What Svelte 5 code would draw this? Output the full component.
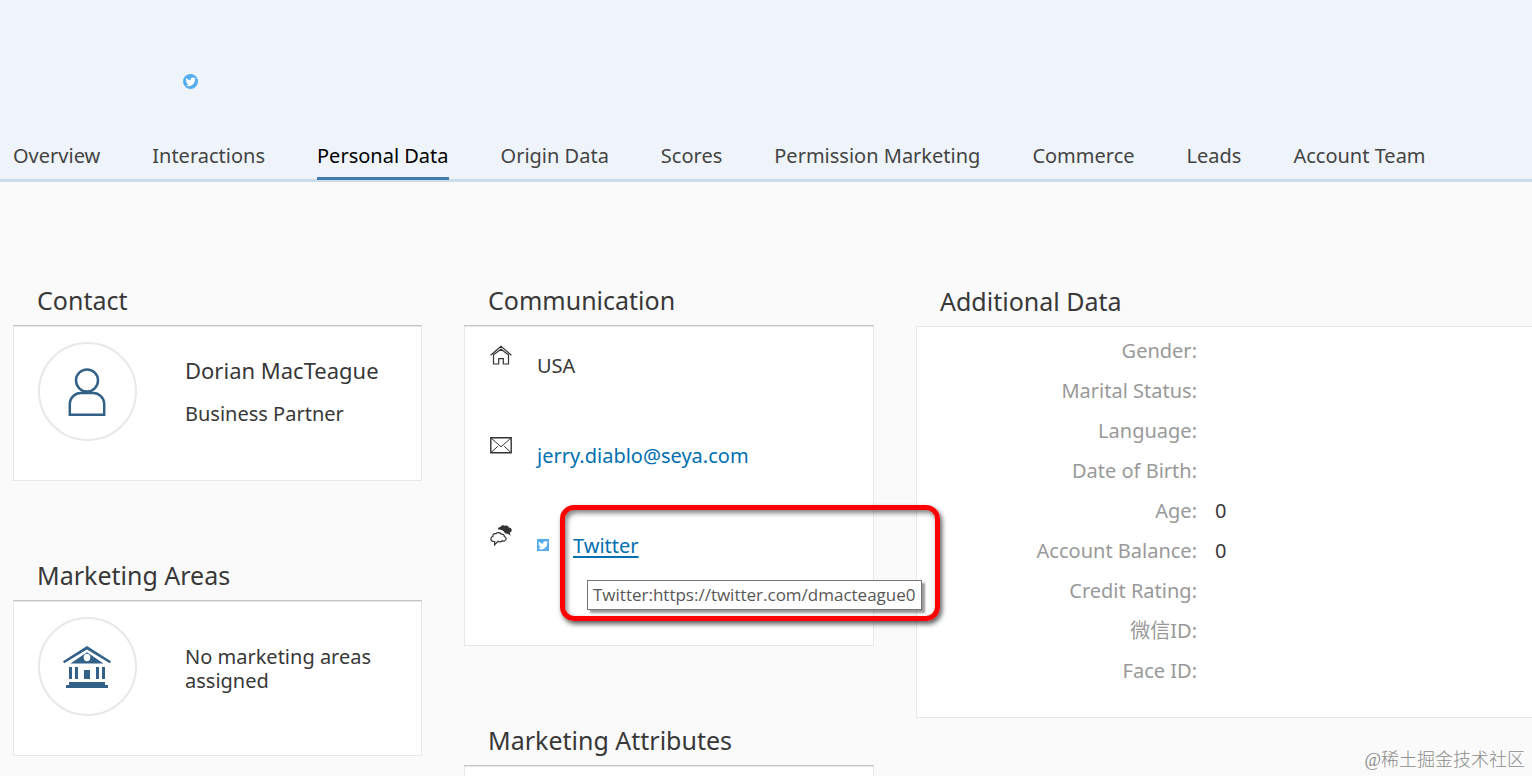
<script>
  const tabs = [
    'Overview', 'Interactions', 'Personal Data', 'Origin Data', 'Scores',
    'Permission Marketing', 'Commerce', 'Leads', 'Account Team',
  ];
  let active = $state('Personal Data');

  const details = [
    ['Gender:', ''],
    ['Marital Status:', ''],
    ['Language:', ''],
    ['Date of Birth:', ''],
    ['Age:', '0'],
    ['Account Balance:', '0'],
    ['Credit Rating:', ''],
    ['微信ID:', ''],
    ['Face ID:', ''],
  ];
</script>

{#snippet bird()}
  <path
    fill="#fff"
    d="M22.2 6.2c-.7.3-1.500.6-2.300.7.8-.5 1.500-1.300 1.800-2.200-.8.5-1.700.8-2.600 1a4.100 4.100 0 0 0-7 3.700C8.700 9.200 5.700 7.600 3.600 5.100c-1.100 1.900-.5 4.300 1.300 5.500-.7 0-1.300-.2-1.900-.5 0 2 1.400 3.700 3.300 4.100-.6.2-1.200.2-1.900.1.5 1.600 2 2.800 3.800 2.800A8.300 8.300 0 0 1 2.200 18.800 11.700 11.700 0 0 0 20.200 8.300c.8-.5 1.500-1.300 2-2.100z"
  />
{/snippet}

<div class="page">
  <header>
    <svg class="badge" viewBox="0 0 24 24" role="img" aria-label="Twitter">
      <circle cx="12" cy="12" r="12" fill="#55acee" />
      <g transform="translate(2 2) scale(.84)">{@render bird()}</g>
    </svg>
    <nav>
      {#each tabs as tab}
        <button class:active={active === tab} onclick={() => (active = tab)}>{tab}</button>
      {/each}
    </nav>
  </header>

  <main>
    <div class="column">
      <section>
        <h2>Contact</h2>
        <div class="card profile">
          <div class="avatar">
            <svg viewBox="0 0 48 48" fill="none" stroke="#346187" stroke-width="2.500">
              <circle cx="24" cy="12.500" r="11" />
              <path d="M6.800 46.800V35.500a11 11 0 0 1 11-10.500h12.400a11 11 0 0 1 11 10.500v11.300z" />
            </svg>
          </div>
          <div class="who">
            <p class="name">Dorian MacTeague</p>
            <p>Business Partner</p>
          </div>
        </div>
      </section>
      <section>
        <h2>Marketing Areas</h2>
        <div class="card profile">
          <div class="avatar">
            <svg viewBox="0 0 48 48" fill="#346187">
              <path d="M24 3 48 18.300 46.800 20.300 24 6.500 1.200 20.300 0 18.300z" />
              <path fill-rule="evenodd" d="M24 9.300 40.500 20.500h-33zM24 10.800a3.300 3.700 0 1 0 0 7.400 3.300 3.700 0 1 0 0-7.400z" />
              <path d="M6 24h3v12H6zM12 24h3v12h-3zM33 24h3v12h-3zM39 24h3v12h-3zM21 27h6v9h-6zM6 39h36v3h3v3H3v-3h3z" />
            </svg>
          </div>
          <p class="empty">No marketing areas assigned</p>
        </div>
      </section>
    </div>

    <div class="column">
      <section>
        <h2>Communication</h2>
        <ul class="card channels">
          <li>
            <svg class="kind" viewBox="0 0 22 22" fill="none" stroke="#333" stroke-width="1.200">
              <path d="M.6 11.200 11 2.200l10.400 9M3.500 10.800V20h5.200v-5.300h4.600V20h5.200v-9.200L11 5.200z" />
            </svg>
            <span>USA</span>
          </li>
          <li>
            <svg class="kind" viewBox="0 0 22 22" fill="none" stroke="#333" stroke-width="1">
              <path stroke-width="1.400" d="M.8 3.700h20.400v15.100H.8z" />
              <path d="M1 4l10 8.800L21 4M1 18.500l6.800-6.200M21 18.500l-6.800-6.200" />
            </svg>
            <a href="mailto:jerry.diablo@seya.com">jerry.diablo@seya.com</a>
          </li>
          <li>
            <svg class="kind" viewBox="0 0 22 22">
              <path fill="#333" d="M8 5.500C7.800 3.600 9.300 2.700 10.500 3 11.200 1.300 13.300.6 14.800 1.800c1.500-.9 3.700-.2 4 1.600 2.200 0 3.500 2 2.700 3.700-.4 1-1 1.300-1.700 1.500l.8 3.200-3.200-2.400c-1 .4-2 .3-2.600-.3C14 6.700 11.500 5.300 8 5.500z" />
              <path fill="#fff" stroke="#333" stroke-width="1.200" d="M4.600 20.800l.1-3.300C2.300 17.700.6 16.300.9 14.500c.1-1.300 1-2 2-2.200-.2-2 1.400-3.200 3-2.600 1.500-1.700 4.500-1.300 5.400.5 2-.3 3.200.9 3 2.400 2 .3 2.300 2.700 1 3.800-1 .9-2.200.8-3 .3-1.200 1.100-3 1.300-4.300.6z" />
            </svg>
            <svg class="network" viewBox="0 0 24 24">
              <rect width="24" height="24" fill="#55acee" />
              {@render bird()}
            </svg>
            <a class="hovered" href="https://twitter.com/dmacteague0">Twitter</a>
            <div class="marker"></div>
            <div class="tooltip" role="tooltip">Twitter:https://twitter.com/dmacteague0</div>
          </li>
        </ul>
      </section>
      <section>
        <h2>Marketing Attributes</h2>
        <div class="card attributes"></div>
      </section>
    </div>

    <div class="column">
      <section class="plain">
        <h2>Additional Data</h2>
        <dl class="card details">
          {#each details as [label, value]}
            <dt>{label}</dt>
            <dd>{value}</dd>
          {/each}
        </dl>
      </section>
    </div>
  </main>

  <div class="watermark">@稀土掘金技术社区</div>
</div>

<style>
  :global(body) {
    margin: 0;
    background: #fafafa;
  }
  .page {
    position: relative;
    box-sizing: border-box;
    height: 100vh;
    overflow: hidden;
    font-family: "Noto Sans", "Noto Sans CJK SC", sans-serif;
    font-size: 20px;
    line-height: 24px;
    color: #383838;
  }
  header {
    background: #eff4fb;
    border-bottom: 3px solid #cbdcea;
  }
  .badge {
    display: block;
    width: 15px;
    height: 15px;
    padding: 74px 0 46px 183px;
  }
  nav {
    display: flex;
    gap: 52px;
    padding: 0 13px;
  }
  nav button {
    flex: none;
    font: inherit;
    color: #444;
    height: 45px;
    margin: 0 0 -1px;
    padding: 0 0 1px;
    border: 0;
    border-bottom: 3px solid transparent;
    background: none;
    white-space: nowrap;
    cursor: pointer;
  }
  nav button.active {
    color: #000;
    border-bottom-color: #427cac;
  }
  main {
    display: grid;
    grid-template-columns: 409fr 410fr 616fr;
    gap: 42px;
    align-items: start;
    padding: 95px 0 0 13px;
  }
  .column {
    display: grid;
    gap: 71px;
    min-width: 0;
  }
  h2 {
    margin: 0;
    padding: 0 0 2px 24px;
    font-size: 25px;
    font-weight: 400;
    line-height: 46px;
    border-bottom: 1px solid #c4c4c4;
  }
  .plain h2 {
    padding-top: 1px;
    border-bottom: 0;
  }
  .card {
    box-sizing: border-box;
    margin: 0;
    background: #fff;
    border: 1px solid #e8e8e8;
  }
  .profile {
    display: flex;
    gap: 48px;
    min-height: 155px;
    padding: 15px 24px;
  }
  .avatar {
    flex: none;
    box-sizing: border-box;
    width: 99px;
    height: 99px;
    display: flex;
    align-items: center;
    justify-content: center;
    padding-right: 1px;
    border: 2px solid #e8e8e8;
    border-radius: 50%;
  }
  .avatar svg {
    width: 48px;
    height: 48px;
  }
  p {
    margin: 0;
  }
  .who {
    display: grid;
    align-content: start;
    gap: 20px;
    padding-top: 16px;
    white-space: nowrap;
  }
  .name {
    font-size: 22px;
  }
  .empty {
    padding-top: 28px;
  }
  .channels {
    display: grid;
    grid-auto-rows: 90px;
    min-height: 320px;
    padding: 17px 24px;
    list-style: none;
  }
  li {
    position: relative;
    display: flex;
    align-items: flex-start;
  }
  li > span,
  li > a {
    padding-top: 10px;
  }
  .kind {
    width: 22px;
    height: 22px;
    margin: 0 25px 0 1px;
  }
  .network {
    width: 12px;
    height: 12px;
    margin: 15px 24px 0 0;
  }
  a {
    color: #0070b1;
    text-decoration: none;
  }
  a.hovered {
    text-decoration: underline;
    text-decoration-thickness: 2px;
    text-underline-offset: 3px;
  }
  .marker {
    position: absolute;
    left: 71px;
    top: -19px;
    box-sizing: border-box;
    width: 380px;
    height: 116px;
    border: 5px solid #f00;
    border-radius: 14px;
    box-shadow: 2px 3px 5px rgba(0, 0, 0, 0.65), inset 2px 3px 5px rgba(0, 0, 0, 0.5);
  }
  .tooltip {
    position: absolute;
    left: 98px;
    top: 56px;
    padding: 2px 5px;
    border: 1px solid #767676;
    background: #fff;
    box-shadow: 3px 3px 2px rgba(0, 0, 0, 0.4);
    color: #575757;
    font-family: "Open Sans", "Noto Sans", sans-serif;
    font-size: 17px;
    white-space: nowrap;
  }
  .attributes {
    min-height: 155px;
  }
  .details {
    display: grid;
    grid-template-columns: 280px 1fr;
    column-gap: 18px;
    grid-auto-rows: 40px;
    min-height: 392px;
    padding: 4px 0;
    border-right: 0;
    line-height: 40px;
  }
  dt {
    color: #999;
    text-align: right;
  }
  dd {
    margin: 0;
  }
  .watermark {
    position: absolute;
    right: 7px;
    bottom: 4px;
    font-family: "Liberation Serif", "Noto Sans CJK SC", serif;
    font-size: 18px;
    font-weight: 300;
    color: #8c8c8c;
  }
</style>
